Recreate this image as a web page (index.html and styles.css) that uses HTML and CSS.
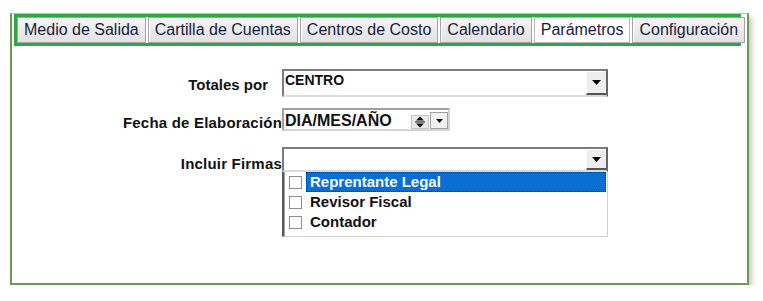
FILE: index.html
```html
<!DOCTYPE html>
<html lang="es">
<head>
    <meta charset="UTF-8">
    <title>Parámetros</title>
    <link rel="stylesheet" href="styles.css">
</head>
<body>
    <div class="panel">
        <div class="tabs">
            <div class="tab">Medio de Salida</div>
            <div class="tab">Cartilla de Cuentas</div>
            <div class="tab">Centros de Costo</div>
            <div class="tab">Calendario</div>
            <div class="tab active">Parámetros</div>
            <div class="tab">Configuración</div>
        </div>

        <div class="form">
            <div class="row row-totales">
                <div class="label"><span>Totales por</span></div>
                <div class="combo">
                    <span class="combo-value">CENTRO</span>
                    <span class="combo-btn">
                        <svg width="9" height="5" viewBox="0 0 9 5"><polygon points="0,0 9,0 4.5,5" fill="#000"/></svg>
                    </span>
                </div>
            </div>

            <div class="row row-fecha">
                <div class="label"><span>Fecha de Elaboración</span></div>
                <div class="date">
                    <span class="date-value">DIA/MES/AÑO</span>
                    <span class="spin">
                        <svg width="18" height="14" viewBox="0 0 18 14">
                            <rect x="0.5" y="0.5" width="17" height="13" fill="#e9e9e9" stroke="#c4c4c4"/>
                            <polygon points="5,5.5 13,5.5 9,1.5" fill="#111"/>
                            <rect x="4" y="6.5" width="10" height="1" fill="#111"/>
                            <polygon points="5,8.5 13,8.5 9,12.5" fill="#111"/>
                        </svg>
                    </span>
                    <span class="date-btn">
                        <svg width="7" height="4" viewBox="0 0 7 4"><polygon points="0,0 7,0 3.5,4" fill="#111"/></svg>
                    </span>
                </div>
            </div>

            <div class="row row-firmas">
                <div class="label"><span>Incluir Firmas</span></div>
                <div class="stack">
                    <div class="combo combo-short">
                        <span class="combo-value"></span>
                        <span class="combo-btn">
                            <svg width="9" height="5" viewBox="0 0 9 5"><polygon points="0,0 9,0 4.5,5" fill="#000"/></svg>
                        </span>
                    </div>
                    <div class="list">
                        <div class="item selected"><span class="check"></span><span class="item-label">Reprentante Legal</span></div>
                        <div class="item"><span class="check"></span><span class="item-label">Revisor Fiscal</span></div>
                        <div class="item"><span class="check"></span><span class="item-label">Contador</span></div>
                    </div>
                </div>
            </div>
        </div>
    </div>
</body>
</html>
```

FILE: styles.css
```css
body {
    margin: 0;
    background: #fff;
    font-family: "Liberation Sans", Arial, sans-serif;
}
.panel {
    box-sizing: border-box;
    width: 739px;
    height: 272px;
    margin: 13px 0 0 10px;
    background: #fff;
    border: 2px solid #6c9a52;
    border-top: 1px solid #b8c4ae;
    box-shadow: 3px 4px 5px rgba(120, 150, 100, 0.45);
}
.tabs {
    display: flex;
    gap: 2px;
    height: 26px;
    margin: 0 6px 0 2px;
    padding: 0 1px 0 0;
    border: 3px solid #2ba846;
}
.tab {
    flex: 1 1 auto;
    box-sizing: border-box;
    padding: 0 6px;
    border: 1px solid #a3a3a3;
    box-shadow: inset 1px 1px 0 #fff;
    background: linear-gradient(#f5f5f5, #e2e2e2);
    color: #1b1b3f;
    font-size: 16px;
    line-height: 24px;
    text-align: center;
    white-space: nowrap;
}
.tab.active {
    background: #fff;
    border-color: #b8b8b8;
    box-shadow: none;
}
.form {
    padding-top: 23px;
}
.row {
    display: flex;
    align-items: flex-end;
}
.row-fecha {
    margin-top: 11px;
}
.row-firmas {
    margin-top: 16px;
    align-items: flex-start;
}
.label {
    box-sizing: border-box;
    width: 270px;
    flex: none;
    display: flex;
    justify-content: flex-end;
    color: #121212;
    font-size: 15px;
    font-weight: bold;
    line-height: 18px;
}
.label span {
    white-space: nowrap;
}
.row-totales .label {
    padding: 0 14px 3px 0;
}
.row-fecha .label {
    margin-bottom: -1px;
    letter-spacing: 0.2px;
}
.row-firmas .label {
    margin-top: 8px;
    letter-spacing: 0.2px;
}
.combo {
    box-sizing: border-box;
    display: flex;
    width: 326px;
    height: 28px;
    background: #fff;
    border: 2px solid;
    border-color: #7c7c7c #666 #dadada #7c7c7c;
}
.combo-short {
    height: 25px;
}
.combo-value {
    flex: 1;
    padding: 1px 0 0 1px;
    color: #111;
    font-size: 14px;
    font-weight: bold;
    line-height: 16px;
}
.combo-btn {
    box-sizing: border-box;
    width: 20px;
    display: flex;
    align-items: center;
    justify-content: center;
    background: #eee;
    border-top: 1px solid #fff;
    border-left: 1px solid #fff;
    border-bottom: 2px solid #555;
}
.date {
    box-sizing: border-box;
    display: flex;
    align-items: flex-start;
    width: 168px;
    height: 23px;
    background: #fff;
    border: 2px solid;
    border-color: #a0a0a0 #d4d4d4 #d4d4d4 #a0a0a0;
}
.date-value {
    flex: 1;
    padding: 2px 0 0 1px;
    color: #111;
    font-size: 16px;
    font-weight: bold;
    line-height: 18px;
    white-space: nowrap;
}
.spin {
    display: flex;
    margin: 5px 1px 0 0;
}
.date-btn {
    box-sizing: border-box;
    width: 18px;
    height: 17px;
    margin-top: 2px;
    display: flex;
    align-items: center;
    justify-content: center;
    background: #f2f2f2;
    border: 1px solid #a0a0a0;
}
.stack {
    display: flex;
    flex-direction: column;
    width: 326px;
}
.list {
    box-sizing: border-box;
    padding: 0 1px 4px 0;
    background: #fff;
    border-left: 2px solid #595959;
    border-right: 1px solid #d0d0d0;
    border-bottom: 1px solid #d0d0d0;
    box-shadow: inset 1px 0 0 #a5a5a5;
}
.item {
    display: flex;
    align-items: center;
    height: 20px;
    padding-left: 5px;
}
.check {
    box-sizing: border-box;
    flex: none;
    width: 13px;
    height: 13px;
    margin-right: 4px;
    background: #fff;
    border: 1px solid #8e8e8e;
}
.item-label {
    flex: 1;
    padding: 0 3px;
    border: 1px dotted transparent;
    color: #111;
    font-size: 15px;
    font-weight: bold;
    line-height: 18px;
}
.item.selected .item-label {
    background: #0b6ed2;
    color: #f4f9ff;
    border-color: #3a2a10;
}
```
